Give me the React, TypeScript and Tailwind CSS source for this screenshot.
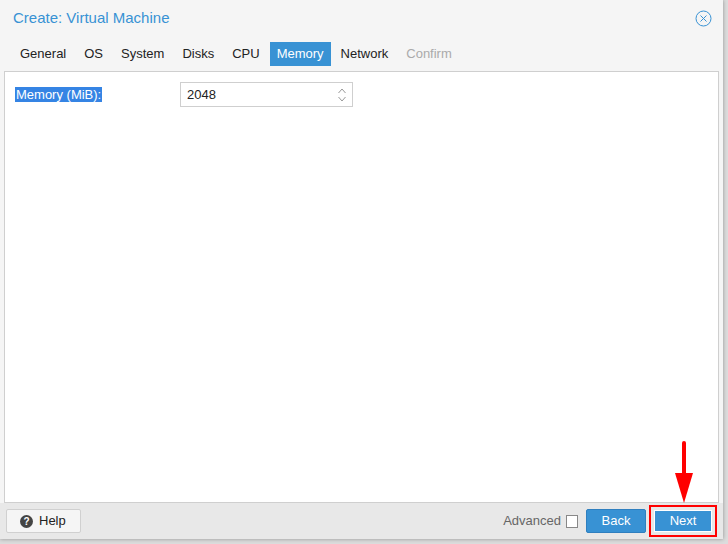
import React from 'react';

const TABS = ['General', 'OS', 'System', 'Disks', 'CPU', 'Memory', 'Network', 'Confirm'];

export default function App() {
  return (
    <div className="w-[728px] h-[544px] bg-[#dcdcdc] relative overflow-hidden text-[13px] text-[#222]" style={{ fontFamily: '"Liberation Sans", Arial, sans-serif' }}>
      <div className="w-[723px] h-[539px] bg-[#f5f5f5] flex flex-col shadow-[0_0_4px_rgba(0,0,0,0.35)]">
        {/* Title */}
        <div className="h-[36px] flex items-center justify-between pl-[13px] pr-[11px]">
          <span className="text-[15px] text-[#3892d4]">Create: Virtual Machine</span>
          <svg width="17" height="17" viewBox="0 0 17 17" fill="none" stroke="#3892d4" strokeWidth="1">
            <circle cx="8.5" cy="8.5" r="7.5" />
            <path d="M5.5 5.5l6 6M11.5 5.5l-6 6" />
          </svg>
        </div>
        {/* Tabs */}
        <div className="h-[35px] flex items-center pl-[12px] gap-[2px]">
          {TABS.map(t => (
            <div
              key={t}
              className={
                t === 'Memory'
                  ? 'h-[24px] px-[7px] flex items-center bg-[#3892d4] text-white'
                  : t === 'Confirm'
                  ? 'h-[24px] px-[8px] flex items-center text-[#aaa]'
                  : 'h-[24px] px-[8px] flex items-center text-[#222]'
              }
            >
              {t}
            </div>
          ))}
        </div>
        {/* Body */}
        <div className="flex-1 mx-[4px] bg-white border border-[#cfcfcf] px-[10px] pt-[10px]">
          <div className="flex items-center">
            <span className="w-[165px]"><span className="bg-[#3584e4] text-white px-[1px]">Memory (MiB):</span></span>
            <div className="w-[173px] h-[25px] border border-[#cfcfcf] flex items-center justify-between pl-[6px] pr-[5px]">
              <span>2048</span>
              <svg width="10" height="16" viewBox="0 0 10 16" fill="none" stroke="#999" strokeWidth="1">
                <path d="M1.5 6l3.5-4 3.5 4M1.5 10l3.5 4 3.5-4" />
              </svg>
            </div>
          </div>
        </div>
        {/* Footer */}
        <div className="h-[36px] bg-[#e8e8e8] flex items-center px-[6px]">
          <button className="h-[24px] w-[75px] bg-[#f5f5f5] border border-[#d0d0d0] rounded-[2px] flex items-center pl-[13px] gap-[6px]">
            <svg width="13" height="13" viewBox="0 0 13 13">
              <circle cx="6.5" cy="6.5" r="6.5" fill="#444" />
              <text x="6.5" y="10" textAnchor="middle" fontSize="10" fontWeight="bold" fill="#fff" fontFamily="Liberation Sans, sans-serif">?</text>
            </svg>
            <span>Help</span>
          </button>
          <div className="flex-1" />
          <span className="text-[#666] mr-[5px]">Advanced</span>
          <span className="w-[12px] h-[13px] border border-[#888] bg-white mr-[8px]" />
          <button className="h-[24px] w-[60px] bg-[#3892d4] border border-[#2f7fbf] text-white rounded-[2px]">Back</button>
          <div className="ml-[3px] p-[3px] border-[2px] border-[#ff0000] bg-[#ff0000]/0">
            <button className="h-[22px] w-[58px] bg-[#3892d4] border border-white text-white">Next</button>
          </div>
        </div>
      </div>
      {/* Arrow annotation */}
      <svg className="absolute left-[673px] top-[441px]" width="22" height="64" viewBox="0 0 22 64">
        <rect x="9" y="0" width="4" height="34" rx="2" fill="#ff0000" />
        <polygon points="2,32 20,32 11,62" fill="#ff0000" />
      </svg>
    </div>
  );
}
